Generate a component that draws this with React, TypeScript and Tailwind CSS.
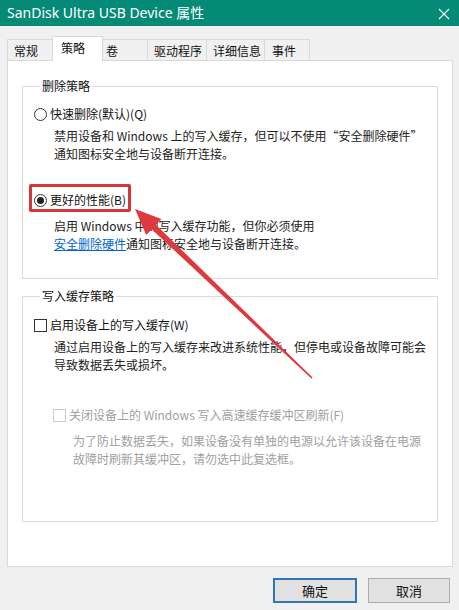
import React from 'react';

const font = { fontFamily: '"Noto Sans CJK SC", "Noto Sans", sans-serif' };

const tabs = [
  { label: '常规', w: 'w-[46px]', pl: 'pl-[6px]' },
  { label: '策略', w: 'w-[51px]', pl: 'pl-[8px]', active: true },
  { label: '卷', w: 'w-[47px]', pl: 'pl-[4px]' },
  { label: '驱动程序', w: 'w-[60px]', pl: 'pl-[6px]' },
  { label: '详细信息', w: 'w-[59px]', pl: 'pl-[6px]' },
  { label: '事件', w: 'w-[46px]', pl: 'pl-[7px]' },
];

const Radio: React.FC<{ checked?: boolean }> = ({ checked }) => (
  <span className="w-[13px] h-[13px] rounded-full border border-[#333] bg-white flex items-center justify-center shrink-0">
    {checked && <span className="w-[7px] h-[7px] rounded-full bg-[#222]" />}
  </span>
);

const Check: React.FC<{ disabled?: boolean }> = ({ disabled }) => (
  <span className={`w-[13px] h-[13px] border bg-white shrink-0 ${disabled ? 'border-[#cccccc]' : 'border-[#333]'}`} />
);

const App: React.FC = () => {
  return (
    <div className="relative w-[459px] h-[610px] bg-[#f0f0f0] overflow-hidden text-[12px] leading-[18px] text-[#111]" style={font}>
      {/* title bar */}
      <div className="h-[26px] bg-[#058a78] flex items-center justify-between pl-[7px] pr-[9px] text-white">
        <span className="text-[14px]" style={{ fontFamily: '"Noto Sans", "Noto Sans CJK SC", sans-serif' }}>SanDisk Ultra USB Device 属性</span>
        <svg width="12" height="12" viewBox="0 0 12 12" className="mt-[1px]">
          <path d="M1 1L11 11M11 1L1 11" stroke="white" strokeWidth="1.1" />
        </svg>
      </div>

      {/* tabs */}
      <div className="flex items-end h-[34px] pl-[7px]">
        {tabs.map((t) =>
          t.active ? (
            <div key={t.label} className={`${t.w} ${t.pl} h-[25px] -mb-[1px] relative z-10 bg-white border border-b-0 border-[#d9d9d9] pt-[2px] -mx-[1px]`}>
              {t.label}
            </div>
          ) : (
            <div key={t.label} className={`${t.w} ${t.pl} h-[21px] bg-[#f0f0f0] border border-b-0 border-[#d9d9d9] -ml-[1px] first:ml-0 pt-[2px]`}>
              {t.label}
            </div>
          )
        )}
      </div>

      {/* panel */}
      <div className="ml-[7px] w-[446px] h-[507px] bg-white border border-[#d9d9d9] pt-[16px] pl-[14px]">
        <fieldset className="w-[416px] h-[202px] border border-[#dcdcdc] pl-[11px]">
          <legend className="ml-[6px] px-[2px]">删除策略</legend>
          <div className="mt-[10px] flex items-center gap-[3px]">
            <Radio />
            <span>快速删除(默认)(Q)</span>
          </div>
          <div className="mt-[4px] pl-[20px] text-[#222]">
            <div>禁用设备和 Windows 上的写入缓存，但可以不使用“安全删除硬件”</div>
            <div>通知图标安全地与设备断开连接。</div>
          </div>
          <div className="mt-[28px] flex items-center gap-[3px]">
            <Radio checked />
            <span>更好的性能(B)</span>
          </div>
          <div className="mt-[8px] pl-[20px] text-[#222]">
            <div>启用 Windows 中的写入缓存功能，但你必须使用</div>
            <div>
              <span className="text-[#0066cc] underline">安全删除硬件</span>通知图标安全地与设备断开连接。
            </div>
          </div>
        </fieldset>

        <fieldset className="mt-[8px] w-[416px] h-[235px] border border-[#dcdcdc] pl-[11px]">
          <legend className="ml-[6px] px-[2px]">写入缓存策略</legend>
          <div className="mt-[11px] flex items-center gap-[3px]">
            <Check />
            <span>启用设备上的写入缓存(W)</span>
          </div>
          <div className="mt-[4px] pl-[20px] text-[#222]">
            <div>通过启用设备上的写入缓存来改进系统性能，但停电或设备故障可能会</div>
            <div>导致数据丢失或损坏。</div>
          </div>
          <div className="mt-[32px] pl-[19px] flex items-center gap-[3px] text-[#a0a0a0]">
            <Check disabled />
            <span>关闭设备上的 Windows 写入高速缓存缓冲区刷新(F)</span>
          </div>
          <div className="mt-[8px] pl-[39px] text-[#a0a0a0]">
            <div>为了防止数据丢失，如果设备没有单独的电源以允许该设备在电源</div>
            <div>故障时刷新其缓冲区，请勿选中此复选框。</div>
          </div>
        </fieldset>
      </div>

      {/* buttons */}
      <div className="mt-[11px] flex justify-end gap-[11px] pr-[9px] text-[13px]">
        <button className="w-[84px] h-[25px] bg-[#e1e1e1] border-2 border-[#2f75b8]">确定</button>
        <button className="w-[82px] h-[25px] bg-[#e1e1e1] border border-[#adadad]">取消</button>
      </div>

      {/* annotation overlays */}
      <div className="absolute left-[29px] top-[184px] w-[102px] h-[28px] border-[3px] border-[#d4363b] rounded-[2px]" />
      <svg className="absolute left-0 top-0 pointer-events-none" width="459" height="610">
        <polygon
          points="135,209 161.4,219 155.9,224.8 312.6,377.4 311.4,378.6 151.7,229.2 146.2,235"
          fill="#dc3a3e"
        />
      </svg>
    </div>
  );
};

export default App;
